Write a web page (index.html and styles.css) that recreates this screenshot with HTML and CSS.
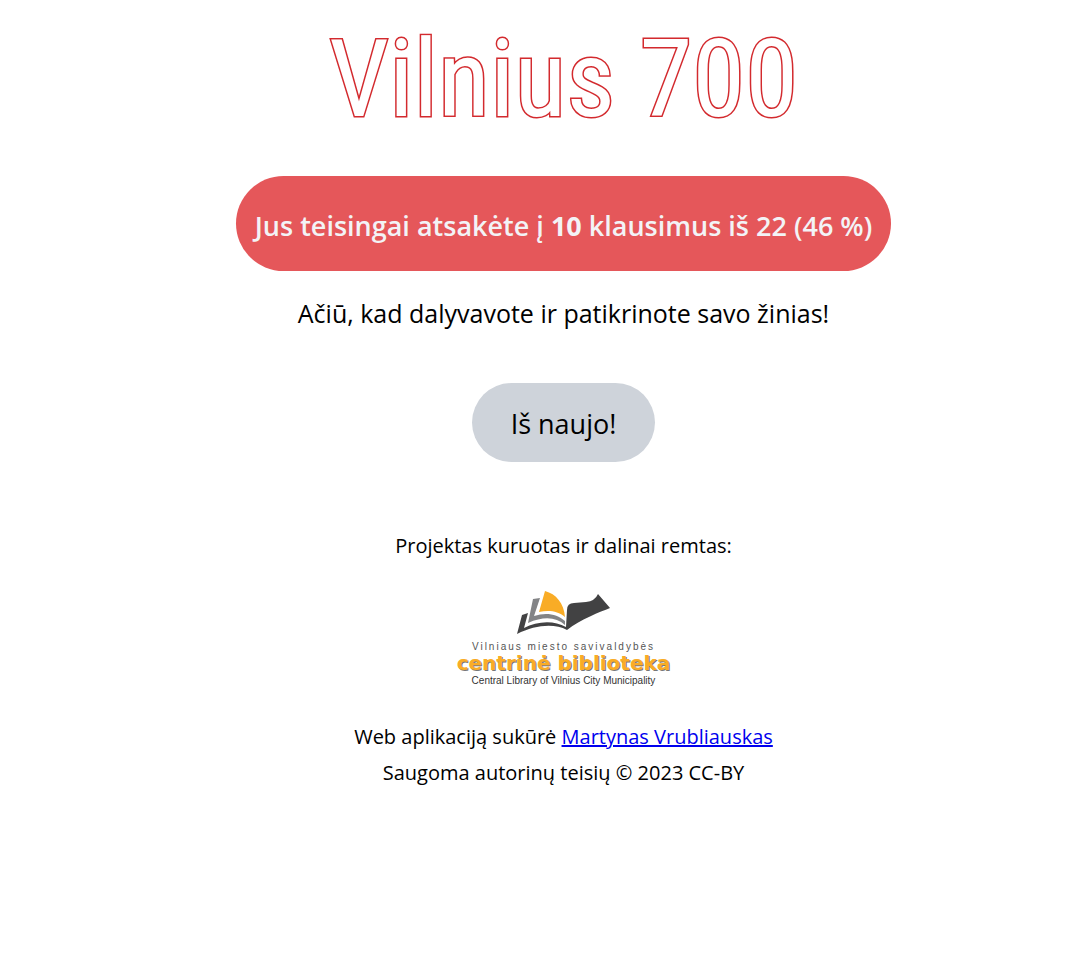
FILE: index.html
```html
<!DOCTYPE html>
<html lang="lt">
<head>
<meta charset="utf-8">
<meta name="viewport" content="width=device-width, initial-scale=1">
<title>Vilnius 700</title>
<link rel="stylesheet" href="styles.css">
</head>
<body>
<main class="page">
  <h1 class="title">Vilnius 700</h1>
  <p class="result">Jus teisingai atsakėte į <strong>10</strong> klausimus iš 22 (46 %)</p>
  <p class="thanks">Ačiū, kad dalyvavote ir patikrinote savo žinias!</p>
  <button class="restart" type="button">Iš naujo!</button>
  <footer class="credits">
    <p>Projektas kuruotas ir dalinai remtas:</p>
    <div class="library">
      <svg class="book" viewBox="0 0 94 45" width="94" height="45" aria-hidden="true">
        <path fill="#f9ac26" d="M29 1C40 4 48 13 49 27C42 21 33 20 23 22Z"/>
        <path fill="#838486" d="M17 9L24 8L18 26C30 22 41 24 49 31V35C40 27 28 26 12 33Z"/>
        <path fill="#424243" d="M6 25L12 23L8 38C21 31 38 30 50 37L51 20Q51 13 58 13L70 12Q79 11 82 4L94 18C84 22 65 29 51 40C38 33 19 35 1 44Z"/>
      </svg>
      <span class="library-city">Vilniaus miesto savivaldybės</span>
      <span class="library-name">centrinė biblioteka</span>
      <span class="library-english">Central Library of Vilnius City Municipality</span>
    </div>
    <p>Web aplikaciją sukūrė <a href="#">Martynas Vrubliauskas</a></p>
    <p>Saugoma autorinų teisių © 2023 CC-BY</p>
  </footer>
</main>
</body>
</html>
```
FILE: styles.css
```css
* { box-sizing: border-box; }
body {
  margin: 0;
  background: #fff;
  color: #000;
  font-family: "Segoe UI", "Open Sans", "Noto Sans", sans-serif;
}
p, h1 { margin: 0; }
.page {
  display: flex;
  flex-direction: column;
  align-items: center;
  padding: 18px 0 32px 59px;
}
.title {
  font: 400 107px/124px "Roboto Condensed", Roboto, sans-serif;
  color: #fff;
  paint-order: stroke fill;
  -webkit-text-stroke: 3px #d32a2e;
  margin-bottom: 34px;
}
.result {
  padding: 28px 19px 23px;
  border-radius: 48px;
  background: #e5575a;
  color: #f3f3f6;
  font-size: 27px;
  line-height: 44px;
  font-weight: 600;
}
.result strong { font-weight: 700; }
.thanks {
  margin-top: 24px;
  font-size: 25px;
  line-height: 36px;
}
.restart {
  margin-top: 52px;
  padding: 19px 39px 17px;
  border: 0;
  border-radius: 40px;
  background: #ced3da;
  color: #000;
  font-family: inherit;
  font-size: 27px;
  line-height: 43px;
}
.credits {
  display: flex;
  flex-direction: column;
  align-items: center;
  margin-top: 66px;
  font-size: 20px;
  line-height: 36px;
}
.credits a { color: #0000ee; }
.library {
  display: flex;
  flex-direction: column;
  align-items: center;
  margin: 26px 0 31px;
  font-family: "Liberation Sans", Arial, sans-serif;
}
.book { margin-bottom: 6px; }
.library-city {
  font-size: 10px;
  line-height: 12px;
  letter-spacing: 2px;
  color: #555;
}
.library-name {
  font-size: 20px;
  line-height: 20px;
  font-family: "DejaVu Sans", sans-serif;
  font-weight: 700;
  color: #f9ac26;
  text-shadow: 1px 1px 0 #777;
}
.library-english {
  font-size: 10px;
  line-height: 15px;
  color: #333;
}
```
